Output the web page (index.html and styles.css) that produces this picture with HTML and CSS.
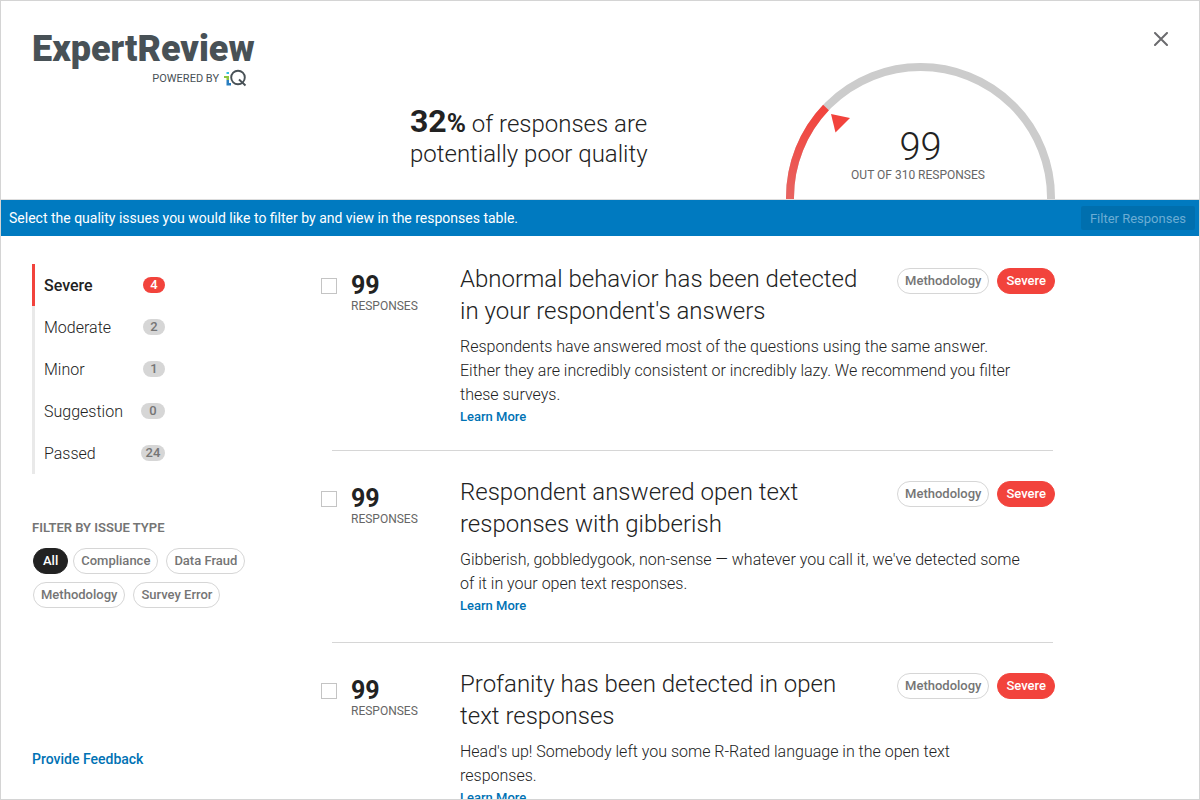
FILE: index.html
```html
<!DOCTYPE html>
<html lang="en">
<head>
<meta charset="utf-8">
<meta name="viewport" content="width=device-width, initial-scale=1">
<title>ExpertReview</title>
<link rel="stylesheet" href="styles.css">
</head>
<body>
<div class="modal">
  <header class="header">
    <div class="brand">
      <h1 class="brand-name">ExpertReview</h1>
      <div class="brand-sub">
        <span>POWERED BY</span>
        <svg class="iq" viewBox="0 0 24 18" width="24" height="18" role="img" aria-label="iQ">
          <rect x="2.500" y="3" width="2.500" height="2" fill="#35c0e0"/>
          <path d="M0 7h5v4H2.500V9H0z" fill="#8cc63f"/>
          <path d="M2.500 11H5v3h2v2.500H2.500z" fill="#2a7fc0"/>
          <circle cx="14" cy="8.500" r="6.800" fill="none" stroke="#485156" stroke-width="1.900"/>
          <path d="M15 10.500l6.500 6" stroke="#485156" stroke-width="1.900"/>
        </svg>
      </div>
    </div>
    <p class="summary"><strong>32<span class="percent">%</span></strong> of responses are<br>potentially poor quality</p>
    <div class="gauge">
      <svg class="gauge-arc" viewBox="0 0 269 136" aria-hidden="true">
        <defs>
          <linearGradient id="arc" x1="0" y1="1" x2="0" y2="0">
            <stop offset="0" stop-color="#e86461"/>
            <stop offset="1" stop-color="#f2433c"/>
          </linearGradient>
        </defs>
        <path d="M4 136V134.500A130.500 130.500 0 0 1 265 134.500V136" fill="none" stroke="#ccc" stroke-width="8"/>
        <path d="M4 136V134.500A130.500 130.500 0 0 1 40 44.500" fill="none" stroke="url(#arc)" stroke-width="8"/>
        <path d="M45 51l19 4-14.500 14.500z" fill="#f2433c"/>
      </svg>
      <div class="gauge-label">
        <span class="gauge-value">99</span>
        <span class="gauge-total">OUT OF 310 RESPONSES</span>
      </div>
    </div>
    <button class="close" type="button" aria-label="Close">
      <svg viewBox="0 0 14 14" width="14" height="14" aria-hidden="true"><path d="M1 1l12 12M13 1L1 13" stroke="#6b6b6e" stroke-width="2" stroke-linecap="round"/></svg>
    </button>
  </header>

  <div class="toolbar">
    <p class="toolbar-text">Select the quality issues you would like to filter by and view in the responses table.</p>
    <button class="filter-button" type="button" disabled>Filter Responses</button>
  </div>

  <div class="body">
    <aside class="sidebar">
      <nav class="levels" aria-label="Severity">
        <a class="level active" href="#severe">Severe<span class="count">4</span></a>
        <a class="level" href="#moderate">Moderate<span class="count">2</span></a>
        <a class="level" href="#minor">Minor<span class="count">1</span></a>
        <a class="level" href="#suggestion">Suggestion<span class="count wide">0</span></a>
        <a class="level" href="#passed">Passed<span class="count wide">24</span></a>
      </nav>
      <h2 class="filter-title">FILTER BY ISSUE TYPE</h2>
      <div class="chips">
        <button class="chip selected" type="button">All</button>
        <button class="chip" type="button">Compliance</button>
        <button class="chip" type="button">Data Fraud</button>
        <button class="chip" type="button">Methodology</button>
        <button class="chip" type="button">Survey Error</button>
      </div>
      <a class="link feedback" href="#feedback">Provide Feedback</a>
    </aside>

    <main class="issues">
      <article class="issue">
        <input class="check" type="checkbox" id="issue-1">
        <label class="responses" for="issue-1"><strong class="number">99</strong><span>RESPONSES</span></label>
        <div class="detail">
          <div class="issue-head">
            <h3 class="issue-title">Abnormal behavior has been detected in your respondent's answers</h3>
            <div class="tags"><span class="chip">Methodology</span><span class="chip severe">Severe</span></div>
          </div>
          <p class="text">Respondents have answered most of the questions using the same answer. Either they are incredibly consistent or incredibly lazy. We recommend you filter these surveys.</p>
          <a class="link more" href="#abnormal">Learn More</a>
        </div>
      </article>
      <article class="issue">
        <input class="check" type="checkbox" id="issue-2">
        <label class="responses" for="issue-2"><strong class="number">99</strong><span>RESPONSES</span></label>
        <div class="detail">
          <div class="issue-head">
            <h3 class="issue-title">Respondent answered open text responses with gibberish</h3>
            <div class="tags"><span class="chip">Methodology</span><span class="chip severe">Severe</span></div>
          </div>
          <p class="text">Gibberish, gobbledygook, non-sense — whatever you call it, we've detected some of it in your open text responses.</p>
          <a class="link more" href="#gibberish">Learn More</a>
        </div>
      </article>
      <article class="issue">
        <input class="check" type="checkbox" id="issue-3">
        <label class="responses" for="issue-3"><strong class="number">99</strong><span>RESPONSES</span></label>
        <div class="detail">
          <div class="issue-head">
            <h3 class="issue-title">Profanity has been detected in open text responses</h3>
            <div class="tags"><span class="chip">Methodology</span><span class="chip severe">Severe</span></div>
          </div>
          <p class="text">Head's up! Somebody left you some R-Rated language in the open text responses.</p>
          <a class="link more" href="#profanity">Learn More</a>
        </div>
      </article>
    </main>
  </div>
</div>
</body>
</html>
```
FILE: styles.css
```css
* { box-sizing: border-box; }

body {
  margin: 0;
  background: #fff;
  color: #222;
  font-family: Roboto, "Liberation Sans", sans-serif;
  font-size: 16px;
  font-weight: 300;
}

h1, h2, h3, p { margin: 0; }

button { font: inherit; cursor: pointer; }

.modal {
  display: flex;
  flex-direction: column;
  height: 100vh;
  border: 1px solid #d4d4d4;
  overflow: hidden;
}

/* Header */
.header {
  display: grid;
  grid-template-columns: 378px 376px 269px 1fr;
  flex: none;
  padding: 28px 31px 0;
  border-bottom: 1px solid #ddd;
}

.brand { width: 222px; }

.brand-name {
  color: #485156;
  font-size: 36px;
  font-weight: 900;
  line-height: 40px;
}

.brand-sub {
  display: flex;
  align-items: flex-end;
  justify-content: flex-end;
  gap: 5px;
  padding-right: 6px;
  color: #485156;
  font-size: 11px;
  font-weight: 400;
  line-height: 16px;
}

.summary {
  padding-top: 77px;
  font-size: 24px;
  line-height: 30px;
}

.summary strong {
  font-size: 32px;
  font-weight: 700;
}

.summary .percent { font-size: 26px; }

.gauge {
  display: grid;
  padding-top: 34px;
}

.gauge-arc,
.gauge-label { grid-area: 1 / 1; }

.gauge-arc {
  display: block;
  width: 100%;
}

.gauge-label {
  display: flex;
  flex-direction: column;
  align-items: center;
  padding-top: 65px;
  padding-right: 5px;
}

.gauge-value {
  padding-left: 5px;
  font-size: 38px;
  line-height: 39px;
}

.gauge-total {
  color: #666;
  font-size: 12px;
  font-weight: 400;
  line-height: 16px;
}

.close {
  justify-self: end;
  align-self: start;
  display: flex;
  padding: 3px 0;
  border: 0;
  background: none;
}

/* Toolbar */
.toolbar {
  display: flex;
  flex: none;
  align-items: center;
  justify-content: space-between;
  height: 36px;
  padding: 0 4px 0 8px;
  background: #007ac0;
  color: #fff;
  font-weight: 400;
}

.toolbar-text { font-size: 14px; }

.filter-button {
  height: 24px;
  padding: 0 9px;
  border: 0;
  border-radius: 2px;
  background: #006fae;
  color: #6badd4;
  font-size: 13px;
}

/* Body */
.body {
  display: flex;
  flex: 1;
  min-height: 0;
}

.sidebar {
  display: flex;
  flex: none;
  flex-direction: column;
  width: 320px;
  padding: 28px 60px 30px 31px;
}

.levels {
  display: flex;
  flex-direction: column;
}

.level {
  display: flex;
  align-items: center;
  justify-content: space-between;
  width: 133px;
  height: 42px;
  padding-left: 9px;
  border-left: 3px solid #e9e9e9;
  color: #222;
  text-decoration: none;
}

.level.active {
  border-left-color: #f2433c;
  font-weight: 500;
}

.count {
  width: 22px;
  border-radius: 8px;
  background: #d6d6d6;
  color: #757575;
  font-size: 13px;
  font-weight: 500;
  line-height: 16px;
  text-align: center;
}

.count.wide { width: 24px; }

.active .count {
  background: #f2433c;
  color: #fff;
}

.filter-title {
  padding: 45px 0 12px;
  color: #757575;
  font-size: 13px;
  font-weight: 600;
  line-height: 17px;
}

.chips {
  display: flex;
  flex-wrap: wrap;
  gap: 8px;
  padding-left: 1px;
}

.chip {
  height: 26px;
  padding: 0 7px;
  border: 1px solid #d6d6d6;
  border-radius: 13px;
  background: #fff;
  color: #757575;
  font-size: 13px;
  font-weight: 500;
  line-height: 24px;
}

.chip.selected {
  margin-right: -3px;
  padding: 0 9px;
  border-color: #222;
  background: #222;
  color: #fff;
}

.chip.severe {
  padding: 0 8px;
  border-color: #f2433c;
  background: #f2433c;
  color: #fff;
}

.link {
  color: #0072b4;
  font-weight: 500;
  text-decoration: none;
}

.feedback {
  margin-top: auto;
  font-size: 14px;
  line-height: 20px;
}

/* Issues */
.issues {
  flex: 1;
  min-width: 0;
  max-width: 734px;
  padding-top: 2px;
  overflow: hidden;
}

.issue {
  display: grid;
  grid-template-columns: 30px 109px 1fr;
  min-height: 192px;
  padding: 25px 0 24px;
  background: linear-gradient(#d6d6d6, #d6d6d6) 11px 100% / calc(100% - 13px) 1px no-repeat;
}

.check {
  appearance: none;
  width: 16px;
  height: 16px;
  margin: 15px 0 0;
  border: 1px solid #c4c4c4;
  background: #fff;
}

.check:checked { background: #007ac0; }

.responses {
  display: flex;
  flex-direction: column;
  padding-top: 10px;
  color: #666;
  font-size: 12px;
  font-weight: 400;
  line-height: 14px;
}

.number {
  color: #222;
  font-size: 25px;
  font-weight: 700;
  line-height: 26px;
}

.issue-head {
  display: flex;
  align-items: flex-start;
  justify-content: space-between;
  gap: 24px;
}

.issue-title {
  max-width: 410px;
  font-size: 24px;
  font-weight: 300;
  line-height: 32px;
}

.tags {
  display: flex;
  flex: none;
  gap: 8px;
  padding-top: 5px;
}

.text {
  max-width: 565px;
  padding-top: 8px;
  line-height: 24px;
}

.more {
  display: block;
  width: max-content;
  font-size: 13px;
  line-height: 20px;
}
```
